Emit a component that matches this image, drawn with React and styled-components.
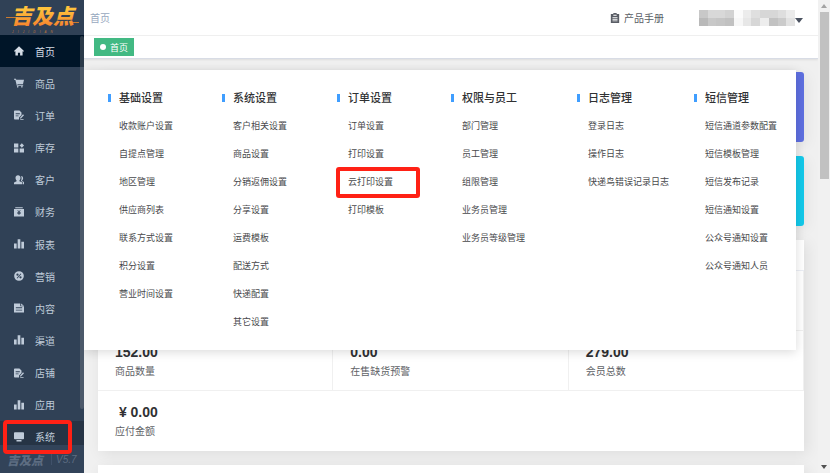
import React from 'react'
import styled, { createGlobalStyle } from 'styled-components';

const GlobalStyle = createGlobalStyle`
    *, *::before, *::after {
        box-sizing: border-box;
    }
    body {
        margin: 0;
        font-family: "Liberation Sans", "Noto Sans CJK SC", sans-serif;
        font-size: 10px;
        color: #303133;
        background-color: #f0f0f0;
    }
    a {
        color: inherit;
        text-decoration: none;
    }
    ul {
        list-style: none;
        margin: 0;
        padding: 0;
    }
    h2, p {
        margin: 0;
    }
`

const icons = {
    home: <path d="M6 .3 12 6l-.9 1-.8-.7V11.500H7.300V8H4.700v3.500H1.700V6.300l-.8.7L0 6z" />,
    cart: <path d="M0 .8h2.300l.4 1.400H12L10.800 7.200H4l.3 1H11v1H3.400L1.600 2H0zM4.500 9.600a1 1 0 1 1 0 2 1 1 0 0 1 0-2zM9.500 9.600a1 1 0 1 1 0 2 1 1 0 0 1 0-2z" />,
    order: <path fillRule="evenodd" d="M0 1.500Q0 .5 1 .5h5.500L9 3v3L6 9v2.500H1q-1 0-1-1zM2 4v1h5V4zM2 6.500v1h3.500v-1zM10.800 5l1.200 1.200L8.600 10l-1.600.5.4-1.600zM7.500 10.800h4v.8h-4z" />,
    grid: <path d="M0 .500h5.200v4.800H0zM0 6.700h5.200v4.800H0zM6.800 6.700H12v4.800H6.800zM9.400.2l2.600 2.700-2.600 2.700-2.600-2.700z" />,
    users: <path d="M4.800.2c1.800 0 3 1.300 3 3.200 0 1.400-.5 2.600-1.300 3.200v.8l3 1.300q.6.3.6 1v1.500H0V9.700q0-.7.6-1l2.500-1.300v-.8C2.300 6 1.800 4.800 1.800 3.400c0-1.900 1.200-3.200 3-3.200zM8.400 1.200c1.500 0 2.500 1.100 2.500 2.700 0 1.200-.5 2.200-1.200 2.700v.6l1.700.9q.6.3.6.9v2.200h-1.200V9.300q0-.8-.8-1.200L8.200 7.100c.6-1 .9-2.200.9-3.400 0-.9-.3-1.700-.7-2.500z" />,
    money: <path fillRule="evenodd" d="M1.500.300h9v1.300h-9zM0 2.500h12v9H0zM4 4l1.200 2H4v.8h1.500v.7H4v.8h1.500v1.400h1V8.300H8v-.8H6.500v-.7H8V6H6.800L8 4H7L6 5.700 5 4z" />,
    chart: <path d="M0 5.500h3.200v6H0zM4.400.300h3.200v11.200H4.400zM8.800 3.200H12v8.300H8.800z" />,
    promo: <path fillRule="evenodd" d="M6 .200a5.800 5.800 0 1 1 0 11.600A5.800 5.800 0 0 1 6 .200zM4.200 3a1.300 1.300 0 1 0 0 2.700 1.300 1.300 0 0 0 0-2.700zM7.800 6.200a1.300 1.300 0 1 0 0 2.700 1.300 1.300 0 0 0 0-2.700zM8 3 3.200 8.300l.8.700L8.800 3.700z" />,
    content: <path fillRule="evenodd" d="M0 .500h7.500V4H12v7.500H0zM8.500.500l3.500 2.700H8.500zM2.200 5.200v1.100h7.600V5.200zM2.200 8v1.100h7.600V8z" />,
    system: <path d="M1 .300h10q1 0 1 .900v6.500q0 .9-1 .9H1q-1 0-1-.9V1.200Q0 .3 1 .300zM3 9.700h6v1.800H3z" />,
    manual: <path fillRule="evenodd" d="M4 0h4v1.200h3V12H1V1.200h3zM4 2.200v1h4v-1zM3 5v1h6V5zM3 7v1h6V7zM3 9v1h6V9z" />,
}

const navItems = [
    { label: "首页", icon: "home", current: true },
    { label: "商品", icon: "cart" },
    { label: "订单", icon: "order" },
    { label: "库存", icon: "grid" },
    { label: "客户", icon: "users" },
    { label: "财务", icon: "money" },
    { label: "报表", icon: "chart" },
    { label: "营销", icon: "promo" },
    { label: "内容", icon: "content" },
    { label: "渠道", icon: "chart" },
    { label: "店铺", icon: "order" },
    { label: "应用", icon: "chart" },
    { label: "系统", icon: "system", open: true },
]

const menuGroups = [
    { title: "基础设置", items: ["收款账户设置", "自提点管理", "地区管理", "供应商列表", "联系方式设置", "积分设置", "营业时间设置"] },
    { title: "系统设置", items: ["客户相关设置", "商品设置", "分销返佣设置", "分享设置", "运费模板", "配送方式", "快递配置", "其它设置"] },
    { title: "订单设置", items: ["订单设置", "打印设置", "云打印设置", "打印模板"] },
    { title: "权限与员工", items: ["部门管理", "员工管理", "组限管理", "业务员管理", "业务员等级管理"] },
    { title: "日志管理", items: ["登录日志", "操作日志", "快递鸟错误记录日志"] },
    { title: "短信管理", items: ["短信通道参数配置", "短信模板管理", "短信发布记录", "短信通知设置", "公众号通知设置", "公众号通知人员"] },
]

const stats = [
    {}, {}, {},
    { value: "152.00", label: "商品数量" },
    { value: "0.00", label: "在售缺货预警" },
    { value: "279.00", label: "会员总数" },
    { value: "\u00a0¥ 0.00", label: "应付金额" },
]

// hidden account name, one grey per cell
const maskCells = [
    ["#c8c8c8", "#d8d8d8", "#d8d8d8", "#d2d2d2", "#fbfbfb", "#ececec", "#dfdfdf", "#d7d7d7", "#d7d7d7", "#dedede", "#ebebeb"],
    ["#b9b9b9", "#c8c8c8", "#c5c5c5", "#c1c1c1", "#f7f7f7", "#e7e7e7", "#d7d7d7", "#ededed", "#c2c2c2", "#cbcbcb", "#e2e2e2"],
]

function Icon({ name, size = 10 }) {
    return (
        <svg width={size} height={size} viewBox="0 0 12 12" fill="currentColor" aria-hidden="true">
            {icons[name]}
        </svg>
    )
}

function Logo() {
    return (
        <svg width="76" height="34" viewBox="0 0 76 34" role="img" aria-label="吉及点">
            <defs>
                <linearGradient id="gold" x1="0" y1="0" x2="0" y2="1">
                    <stop offset="0.2" stopColor="#ffc23c" />
                    <stop offset="1" stopColor="#f47c2c" />
                </linearGradient>
            </defs>
            <path d="M2 16.500h12M66 21.500h9" stroke="#c9792f" strokeWidth="1" />
            <text x="7" y="23" fontSize="21" fontWeight="900" fontStyle="italic" fill="url(#gold)">吉及点</text>
            <text x="8" y="32" fontSize="3" fontStyle="italic" fill="#c27a3c" style={{ whiteSpace: "pre" }}>J     I     J     I     D     I     A     N</text>
        </svg>
    )
}

function Sidebar() {
    return (
        <SidebarStyle>
            <a className="logo" href="#home"><Logo /></a>
            <nav>
                {navItems.map((item) => (
                    <NavLink key={item.label} href="#nav" $current={item.current} $open={item.open}>
                        <Icon name={item.icon} />
                        <span>{item.label}</span>
                    </NavLink>
                ))}
            </nav>
            <div className="version">
                <strong>吉及点</strong>
                <span>V5.7</span>
            </div>
            <div className="nav_scroll" />
        </SidebarStyle>
    )
}

function SettingsMenu() {
    return (
        <SettingsMenuStyle>
            {menuGroups.map((group) => (
                <MenuGroup key={group.title}>
                    <h2>{group.title}</h2>
                    <ul>
                        {group.items.map((item) => (
                            <li key={item}>
                                <MenuLink href="#settings" $marked={item === "云打印设置"}>{item}</MenuLink>
                            </li>
                        ))}
                    </ul>
                </MenuGroup>
            ))}
        </SettingsMenuStyle>
    )
}

function Dashboard() {
    return (
        <DashboardStyle>
            <Banner $color="#5e6fe0" />
            <Banner $color="#13c9ea" />
            <Card>
                <div className="card_head" />
                <div className="stats">
                    {stats.map((stat, i) => (
                        <Stat key={i}>
                            <p className="value">{stat.value}</p>
                            <p className="label">{stat.label}</p>
                        </Stat>
                    ))}
                </div>
            </Card>
            <Card>
                <div className="card_head" />
            </Card>
        </DashboardStyle>
    )
}

function App() {
    return (
        <PageStyle>
            <GlobalStyle />
            <Sidebar />
            <MainStyle>
                <HeaderStyle>
                    <span className="crumb">首页</span>
                    <a className="manual" href="#manual"><Icon name="manual" />产品手册</a>
                    <button className="account" aria-label="账户">
                        <svg width="96" height="16" viewBox="0 0 11 2" preserveAspectRatio="none" shapeRendering="crispEdges">
                            {maskCells.map((row, y) => row.map((c, x) => (
                                <rect key={x + "-" + y} x={x} y={y} width="1" height="1" fill={c} />
                            )))}
                        </svg>
                        <svg className="caret" width="8" height="5" viewBox="0 0 8 5"><path d="M0 0h8L4 5z" fill="#4a5260" /></svg>
                    </button>
                </HeaderStyle>
                <TabsStyle>
                    <a className="tab" href="#home">首页</a>
                </TabsStyle>
                <Dashboard />
                <SettingsMenu />
            </MainStyle>
            <ScrollbarStyle>
                <svg width="6" height="4" viewBox="0 0 6 4"><path d="M0 4h6L3 0z" fill="#a3a3a3" /></svg>
                <div className="thumb" />
                <svg width="6" height="4" viewBox="0 0 6 4"><path d="M0 0h6L3 4z" fill="#505050" /></svg>
            </ScrollbarStyle>
        </PageStyle>
    )
}

const PageStyle = styled.div`
    display: flex;
    height: 100vh;
    overflow: hidden;
`

const SidebarStyle = styled.aside`
    position: relative;
    display: flex;
    flex-direction: column;
    flex: 0 0 84px;
    background-color: #304156;
    color: #bfcbd9;
    .logo {
        display: flex;
        justify-content: center;
        align-items: center;
        height: 35px;
    }
    nav {
        flex: 1;
        display: flex;
        flex-direction: column;
    }
    .version {
        display: flex;
        align-items: center;
        gap: 8px;
        height: 28px;
        margin-top: -8px;
        padding-left: 7px;
        background-color: #324359;
        color: #5d6d82;
        font-style: italic;
        z-index: 1;
        strong {
            font-size: 12px;
            font-weight: 900;
        }
        span {
            padding-left: 4px;
            border-left: 1px solid #40516a;
        }
    }
    .nav_scroll {
        position: absolute;
        top: 36px;
        right: 0;
        bottom: 64px;
        width: 4px;
        border-radius: 2px;
        background-color: rgba(144, 147, 153, 0.3);
    }
`

const NavLink = styled.a`
    position: relative;
    flex: 1;
    display: flex;
    align-items: center;
    gap: 11px;
    padding-left: 14px;
    background-color: ${(props) => props.$current ? "#001528" : props.$open ? "#263445" : "transparent"};
    color: ${(props) => props.$current ? "#d5dde6" : "#bfcbd9"};
    &::after {
        content: "";
        display: ${(props) => props.$open ? "block" : "none"};
        position: absolute;
        inset: -1px 12px -1px 3px;
        border: 4px solid #ff2115;
        border-radius: 4px;
        z-index: 2;
    }
`

const MainStyle = styled.main`
    position: relative;
    flex: 1;
    min-width: 0;
    display: flex;
    flex-direction: column;
    overflow: hidden;
`

const HeaderStyle = styled.header`
    display: flex;
    align-items: center;
    flex: 0 0 36px;
    padding: 0 15px 0 6px;
    background-color: #fff;
    border-bottom: 1px solid #f0f0f0;
    .crumb {
        color: #97a8be;
    }
    .manual {
        display: flex;
        align-items: center;
        gap: 4px;
        margin-left: auto;
        margin-right: 35px;
        color: #5a5e66;
    }
    .account {
        display: flex;
        align-items: flex-end;
        padding: 0;
        border: none;
        background: none;
        cursor: pointer;
    }
    .caret {
        margin-bottom: 3px;
    }
`

const TabsStyle = styled.div`
    display: flex;
    align-items: center;
    flex: 0 0 23px;
    padding-left: 10px;
    background-color: #fff;
    border-bottom: 1px solid #d8dce5;
    box-shadow: 0 1px 2px rgba(0, 0, 0, 0.08);
    z-index: 1;
    .tab {
        display: flex;
        align-items: center;
        gap: 4px;
        height: 18px;
        padding: 0 6px;
        background-color: #42b983;
        color: #fff;
        font-size: 9px;
        &::before {
            content: "";
            width: 6px;
            height: 6px;
            border-radius: 50%;
            background-color: #fff;
        }
    }
`

const DashboardStyle = styled.div`
    display: flex;
    flex-direction: column;
    gap: 14px;
    padding: 13px 14px 0;
`

const Banner = styled.div`
    flex: 0 0 70px;
    border-radius: 3px;
    background-color: ${(props) => props.$color};
    box-shadow: 3px 3px 14px rgba(0, 0, 0, 0.06);
`

const Card = styled.section`
    flex: none;
    background-color: #fff;
    box-shadow: 3px 3px 14px rgba(0, 0, 0, 0.08);
    .card_head {
        height: 31px;
        border-bottom: 1px solid #ebeef5;
    }
    .stats {
        display: grid;
        grid-template-columns: repeat(3, 1fr);
    }
`

const Stat = styled.div`
    height: 60px;
    padding: 12px 17px 0;
    border-right: 1px solid #f0f0f0;
    border-bottom: 1px solid #f0f0f0;
    &:last-child {
        border-color: transparent;
    }
    .value {
        font-size: 14px;
        font-weight: bold;
        line-height: 19px;
    }
    .label {
        line-height: 19px;
        color: #606266;
    }
`

const SettingsMenuStyle = styled.div`
    position: absolute;
    top: 70px;
    left: 0;
    right: 22px;
    display: grid;
    grid-template-columns: 114fr 115fr 114fr 126fr 117fr 102fr;
    padding: 14px 0 14px 24px;
    background-color: #fff;
    box-shadow: 0 2px 10px rgba(0, 0, 0, 0.15);
    z-index: 2;
`

const MenuGroup = styled.section`
    h2 {
        display: flex;
        align-items: center;
        gap: 8px;
        font-size: 11px;
        font-weight: 500;
        line-height: 28px;
        &::before {
            content: "";
            width: 3px;
            height: 8px;
            background-color: #409eff;
        }
    }
    ul {
        padding-left: 11px;
    }
`

const MenuLink = styled.a`
    position: relative;
    display: block;
    font-size: 9px;
    line-height: 28px;
    white-space: nowrap;
    color: #48494c;
    &::after {
        content: "";
        display: ${(props) => props.$marked ? "block" : "none"};
        position: absolute;
        top: -1px;
        left: -12px;
        width: 84px;
        height: 31px;
        border: 4px solid #ff2115;
        border-radius: 3px;
    }
`

const ScrollbarStyle = styled.div`
    display: flex;
    flex-direction: column;
    align-items: center;
    flex: 0 0 12px;
    padding: 4px 0;
    background-color: #f1f1f1;
    .thumb {
        width: 9px;
        height: 36%;
        margin: 4px 0 auto;
        background-color: #c1c1c1;
    }
`

export default App
